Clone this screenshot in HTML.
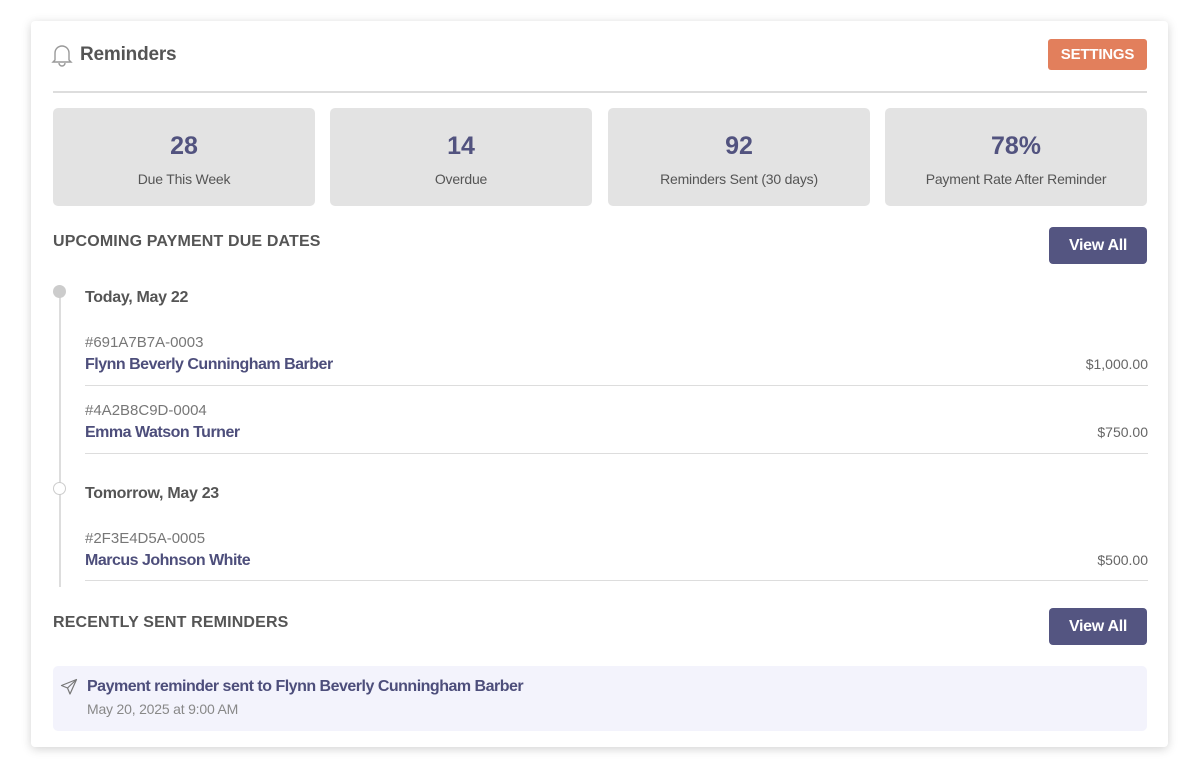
<!DOCTYPE html>
<html><head><style>
*{box-sizing:border-box;margin:0;padding:0}
body{width:1200px;height:775px;background:#fff;font-family:"Liberation Sans",sans-serif;position:relative;overflow:hidden}
.card{position:absolute;left:31px;top:21px;width:1137px;height:726px;background:#fff;border-radius:4px;box-shadow:0 2px 10px rgba(0,0,0,.18)}
.abs{position:absolute}
.title{left:80px;top:44px;font-size:19px;color:#555;font-weight:bold;letter-spacing:-.2px}
.settings{left:1048px;top:39px;width:99px;height:31px;background:#e27f5c;color:#fff;font-weight:bold;font-size:15px;border-radius:3px;text-align:center;line-height:32px;letter-spacing:-.2px}
.hr{left:53px;top:91px;width:1094px;height:2px;background:#ddd}
.stat{top:108px;width:262px;height:98px;background:#e3e3e3;border-radius:5px;text-align:center}
.stat b{display:block;margin-top:24px;font-size:25px;color:#52537f}
.stat span{display:block;margin-top:10px;font-size:14px;color:#555;letter-spacing:-.2px}
.h{left:53px;font-size:16px;color:#555;font-weight:bold;letter-spacing:.15px}
.btn{left:1049px;width:98px;height:37px;background:#545581;color:#fff;border-radius:4px;text-align:center;line-height:37px;font-size:16px;font-weight:bold;letter-spacing:-.3px}
.date{left:85px;font-size:16px;font-weight:bold;color:#555;letter-spacing:-.3px}
.id{left:85px;font-size:15px;color:#777}
.name{left:85px;font-size:16px;font-weight:bold;color:#4d4e7b;letter-spacing:-.5px}
.amt{right:52px;font-size:14px;color:#666}
.sep{left:85px;width:1063px;height:1px;background:#ddd}
</style></head><body>
<div class="card"></div>
<svg class="abs" style="left:51px;top:43px" width="22" height="24" viewBox="0 0 22 24" fill="none" stroke="#999" stroke-width="1.4"><path d="M4 17V10a7 7 0 0 1 14 0v7l2 2H2z"/><path d="M8 20a3 3 0 0 0 6 0"/></svg>
<div class="abs title">Reminders</div>
<div class="abs settings">SETTINGS</div>
<div class="abs hr"></div>
<div class="abs stat" style="left:53px"><b>28</b><span>Due This Week</span></div>
<div class="abs stat" style="left:330px"><b>14</b><span>Overdue</span></div>
<div class="abs stat" style="left:608px"><b>92</b><span>Reminders Sent (30 days)</span></div>
<div class="abs stat" style="left:885px"><b>78%</b><span>Payment Rate After Reminder</span></div>
<div class="abs h" style="top:233px">UPCOMING PAYMENT DUE DATES</div>
<div class="abs btn" style="top:227px">View All</div>
<div class="abs" style="left:59px;top:291px;width:2px;height:296px;background:#ddd"></div>
<div class="abs" style="left:53px;top:285px;width:13px;height:13px;border-radius:50%;background:#ccc"></div>
<div class="abs" style="left:53px;top:482px;width:13px;height:13px;border-radius:50%;background:#fff;border:1.5px solid #ccc"></div>
<div class="abs date" style="top:289px">Today, May 22</div>
<div class="abs id" style="top:334px">#691A7B7A-0003</div>
<div class="abs name" style="top:356px">Flynn Beverly Cunningham Barber</div>
<div class="abs amt" style="top:356px">$1,000.00</div>
<div class="abs sep" style="top:385px"></div>
<div class="abs id" style="top:402px">#4A2B8C9D-0004</div>
<div class="abs name" style="top:424px">Emma Watson Turner</div>
<div class="abs amt" style="top:424px">$750.00</div>
<div class="abs sep" style="top:453px"></div>
<div class="abs date" style="top:485px">Tomorrow, May 23</div>
<div class="abs id" style="top:530px">#2F3E4D5A-0005</div>
<div class="abs name" style="top:552px">Marcus Johnson White</div>
<div class="abs amt" style="top:552px">$500.00</div>
<div class="abs sep" style="top:580px"></div>
<div class="abs h" style="top:614px">RECENTLY SENT REMINDERS</div>
<div class="abs btn" style="top:608px">View All</div>
<div class="abs" style="left:53px;top:666px;width:1094px;height:65px;background:#f3f3fc;border-radius:5px"></div>
<svg class="abs" style="left:60px;top:678px" width="18" height="18" viewBox="0 0 18 18" fill="none" stroke="#777" stroke-width="1.2" stroke-linejoin="round"><path d="M16.5 1.5L1.5 7.5l6 2.5 2.5 6z"/><path d="M16.5 1.5L7.5 10"/></svg>
<div class="abs" style="left:87px;top:678px;font-size:16px;font-weight:bold;color:#4d4e7b;letter-spacing:-.5px">Payment reminder sent to Flynn Beverly Cunningham Barber</div>
<div class="abs" style="left:87px;top:701px;font-size:14px;color:#888;letter-spacing:-.2px">May 20, 2025 at 9:00 AM</div>
</body></html>
